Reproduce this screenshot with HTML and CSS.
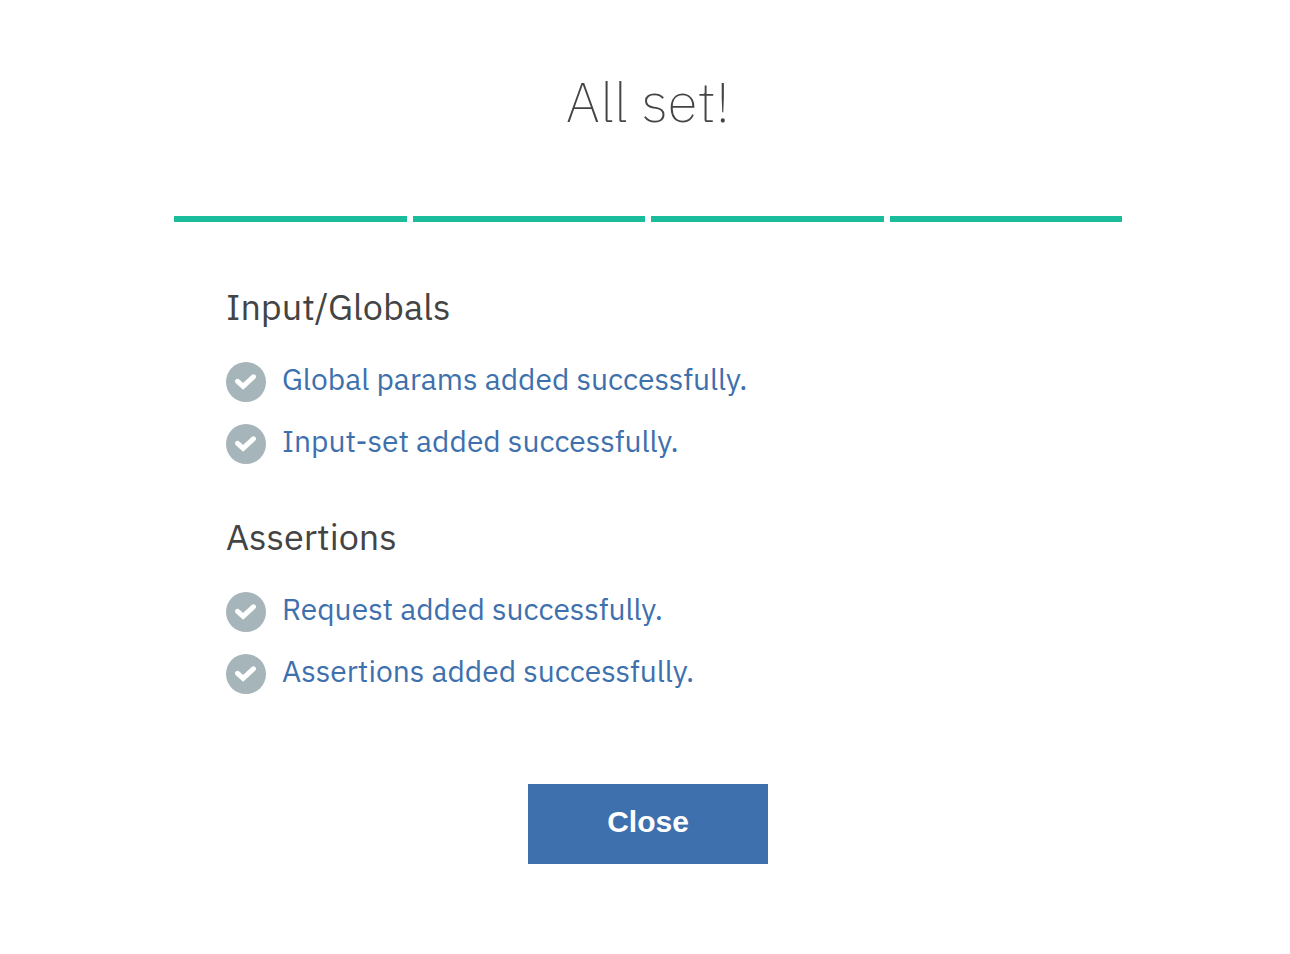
FILE: index.html
```html
<!DOCTYPE html>
<html lang="en">
<head>
<meta charset="utf-8">
<meta name="viewport" content="width=device-width, initial-scale=1">
<title>All set!</title>
<link rel="stylesheet" href="styles.css">
</head>
<body>
<svg class="defs" aria-hidden="true">
  <symbol id="check" viewBox="0 0 40 40">
    <circle cx="20" cy="20" r="20" fill="#a6b5ba"/>
    <path d="M11.6 19.3 L17.1 24.3 L27.4 14.8" fill="none" stroke="#fff" stroke-width="5" stroke-linecap="round" stroke-linejoin="miter"/>
  </symbol>
</svg>
<main class="wizard">
  <h1 class="title">All set!</h1>
  <div class="steps" aria-hidden="true">
    <span class="step"></span><span class="step"></span><span class="step"></span><span class="step"></span>
  </div>
  <div class="summary">
    <section class="group">
      <h2 class="heading">Input/Globals</h2>
      <ul class="list">
        <li class="item"><svg class="icon" aria-hidden="true"><use href="#check"/></svg><span class="label">Global params added successfully.</span></li>
        <li class="item"><svg class="icon" aria-hidden="true"><use href="#check"/></svg><span class="label">Input-set added successfully.</span></li>
      </ul>
    </section>
    <section class="group">
      <h2 class="heading">Assertions</h2>
      <ul class="list">
        <li class="item"><svg class="icon" aria-hidden="true"><use href="#check"/></svg><span class="label">Request added successfully.</span></li>
        <li class="item"><svg class="icon" aria-hidden="true"><use href="#check"/></svg><span class="label">Assertions added successfully.</span></li>
      </ul>
    </section>
  </div>
  <button class="close" type="button">Close</button>
</main>
</body>
</html>
```
FILE: styles.css
```css
* {
  box-sizing: border-box;
}

body {
  margin: 0;
  padding-left: 6px;
  background: #fff;
  color: #444;
  font-family: "IBM Plex Sans", Roboto, sans-serif;
}

.defs {
  display: none;
}

.wizard {
  display: flex;
  flex-direction: column;
  align-items: center;
  max-width: 948px;
  margin: 0 auto;
  padding: 64px 0;
}

.title {
  margin: 0;
  font-size: 56px;
  font-weight: 200;
  line-height: 74px;
}

.steps {
  display: flex;
  gap: 6px;
  width: 100%;
  margin-top: 78px;
}

.step {
  flex: 1;
  height: 6px;
  background: #1abc9c;
}

.summary {
  display: flex;
  flex-direction: column;
  gap: 50px;
  width: 100%;
  padding: 62px 52px 0;
}

.heading {
  margin: 0 0 32px;
  font-size: 36px;
  font-weight: 400;
  line-height: 46px;
}

.list {
  display: flex;
  flex-direction: column;
  gap: 22px;
  margin: 0;
  padding: 0;
  list-style: none;
}

.item {
  display: flex;
  gap: 16px;
  color: #3e70ad;
  font-size: 30px;
  line-height: 34px;
}

.icon {
  flex: none;
  width: 40px;
  height: 40px;
}

.close {
  width: 240px;
  height: 80px;
  margin-top: 90px;
  padding: 0 0 4px;
  border: 0;
  background: #3e70ad;
  color: #fff;
  font-family: "Liberation Sans", Arial, sans-serif;
  font-size: 30px;
  font-weight: 700;
  cursor: pointer;
}
```
